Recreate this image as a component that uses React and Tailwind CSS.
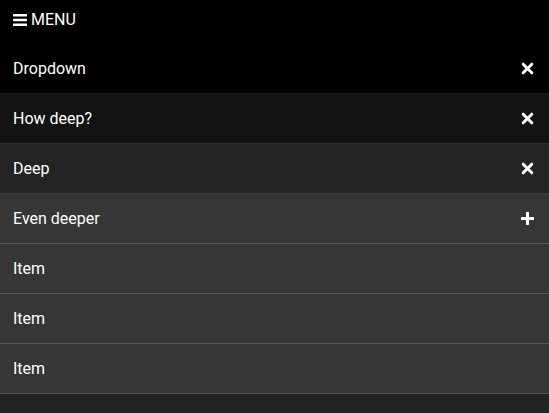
const rows = [
  { label: 'Dropdown', bg: 'bg-[#000000]', border: 'border-[#1c1c1c]', icon: 'x' },
  { label: 'How deep?', bg: 'bg-[#131313]', border: 'border-[#2a2a2a]', icon: 'x' },
  { label: 'Deep', bg: 'bg-[#242424]', border: 'border-[#3a3a3a]', icon: 'x' },
  { label: 'Even deeper', bg: 'bg-[#363636]', border: 'border-[#555555]', icon: 'plus' },
  { label: 'Item', bg: 'bg-[#363636]', border: 'border-[#555555]' },
  { label: 'Item', bg: 'bg-[#363636]', border: 'border-[#555555]' },
  { label: 'Item', bg: 'bg-[#363636]', border: 'border-[#555555]' },
];

const Times = () => (
  <svg width="13" height="13" viewBox="0 0 13 13">
    <path d="M2.2 2.2 L10.8 10.8 M10.8 2.2 L2.2 10.8" stroke="white" strokeWidth="3" strokeLinecap="round" />
  </svg>
);

const Plus = () => (
  <svg width="13" height="13" viewBox="0 0 13 13">
    <path d="M6.5 1 V12 M1 6.5 H12" stroke="white" strokeWidth="3" strokeLinecap="round" />
  </svg>
);

const Bars = () => (
  <svg width="14" height="12" viewBox="0 0 14 12">
    <rect x="0" y="0" width="14" height="2.6" rx="0.6" fill="white" />
    <rect x="0" y="4.7" width="14" height="2.6" rx="0.6" fill="white" />
    <rect x="0" y="9.4" width="14" height="2.6" rx="0.6" fill="white" />
  </svg>
);

const App = () => {
  return (
    <div className="min-h-[413px] bg-[#222222] text-white font-['Roboto',sans-serif]">
      {/* Header */}
      <div className="h-[44px] bg-black flex items-center gap-[4px] px-[13px] pb-[5px] text-[16px]">
        <Bars />
        <span>MENU</span>
      </div>

      {/* Menu rows */}
      <ul>
        {rows.map((row, i) => (
          <li
            key={i}
            className={`h-[50px] flex items-center justify-between pl-[13px] pr-[15px] border-b text-[16px] ${row.bg} ${row.border}`}
          >
            <span>{row.label}</span>
            {row.icon === 'x' && <Times />}
            {row.icon === 'plus' && <Plus />}
          </li>
        ))}
      </ul>
    </div>
  );
};

export default App;
